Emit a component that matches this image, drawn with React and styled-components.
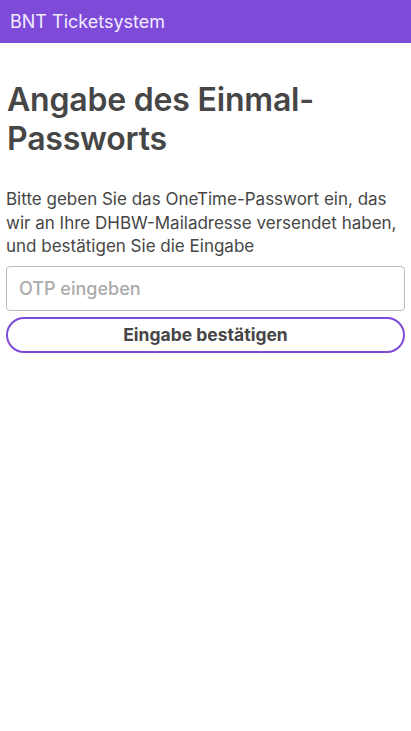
import React, { useState } from 'react';
import styled, { createGlobalStyle } from 'styled-components';

const GlobalStyle = createGlobalStyle`
  html, body {
    margin: 0;
    padding: 0;
    background: #ffffff;
    font-family: Inter, "Noto Sans", sans-serif;
  }
`;

const App = () => {
    const [otp, setOtp] = useState('');

    const handleSubmit = e => {
        e.preventDefault();
    };

    return (<Page>
        <GlobalStyle />
        <Header>
            <HeaderTitle>BNT Ticketsystem</HeaderTitle>
        </Header>
        <Content>
            <Title>Angabe des Einmal-Passworts</Title>
            <Text>
                Bitte geben Sie das OneTime-Passwort ein, das wir an Ihre DHBW-Mailadresse versendet haben, und bestätigen Sie die Eingabe
            </Text>
            <Form onSubmit={handleSubmit}>
                <Input
                    name="otp"
                    type="text"
                    placeholder="OTP eingeben"
                    value={otp}
                    onChange={e => setOtp(e.target.value)}
                />
                <Button type="submit">Eingabe bestätigen</Button>
            </Form>
        </Content>
    </Page>);
};

export default App;

const Page = styled.div`
    min-height: 731px;
    background: #ffffff;
`

const Header = styled.header`
    height: 43px;
    background: #7e4bd9;
    display: flex;
    align-items: center;
    padding: 0 10px;
`

const HeaderTitle = styled.span`
    color: #f3ecff;
    font-size: 18px;
    font-weight: 400;
    margin-top: -1px;
`

const Content = styled.main`
    padding: 37px 6px 0;
`

const Title = styled.h1`
    margin: 0 0 0 1px;
    font-size: 32px;
    line-height: 39px;
    font-weight: 600;
    color: #464646;
    letter-spacing: -0.2px;
`

const Text = styled.p`
    margin: 30px 0 7px;
    font-size: 17px;
    line-height: 23.5px;
    color: #464646;
`

const Form = styled.form`
    display: flex;
    flex-direction: column;
    gap: 6px;
`

const Input = styled.input`
    box-sizing: border-box;
    height: 45px;
    width: 100%;
    padding: 0 12px;
    border: 1px solid #bcbcbc;
    border-radius: 4px;
    font-family: Inter, "Noto Sans", sans-serif;
    font-size: 18px;
    font-weight: 500;
    color: #464646;
    outline: none;

    &::placeholder {
        color: #ababab;
    }
`

const Button = styled.button`
    box-sizing: border-box;
    height: 36px;
    width: 100%;
    border: 2px solid #7e4bd9;
    border-radius: 18px;
    background: #ffffff;
    font-family: Inter, "Noto Sans", sans-serif;
    font-size: 17.5px;
    font-weight: 700;
    color: #464646;
    cursor: pointer;
`
